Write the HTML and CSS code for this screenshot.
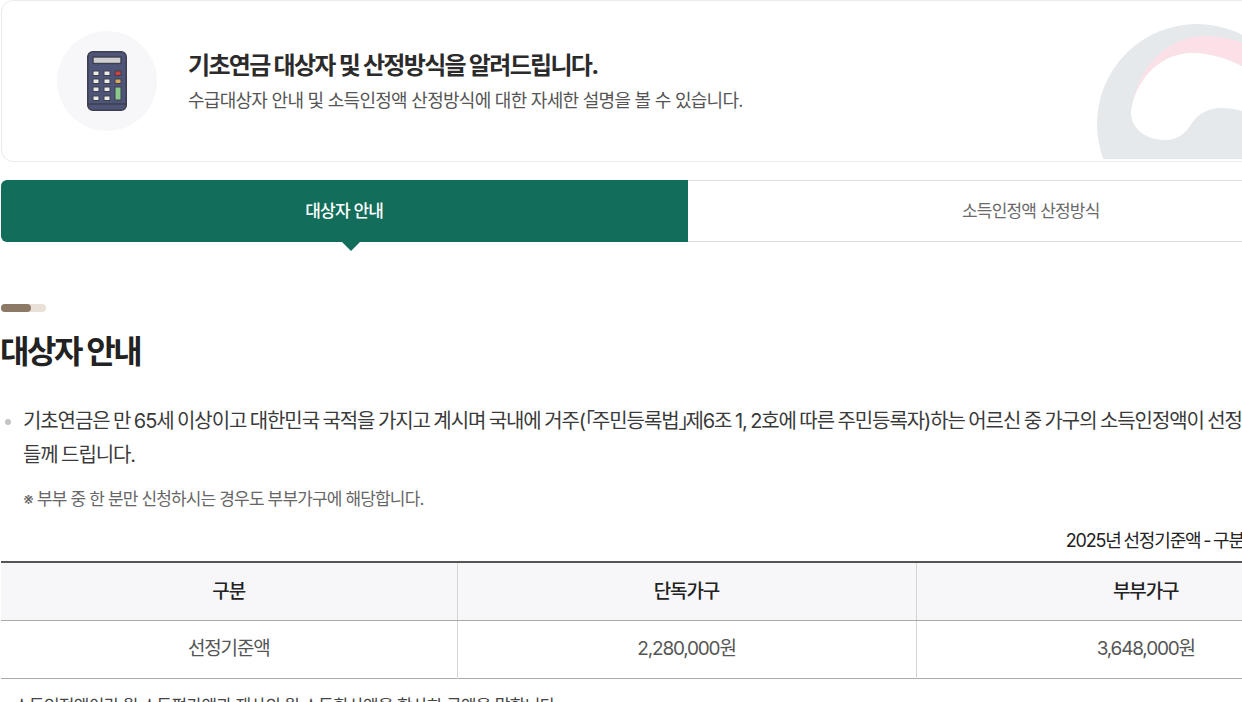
FILE: index.html
```html
<!DOCTYPE html>
<html lang="ko">
<head>
<meta charset="utf-8">
<title>기초연금 대상자 및 산정방식</title>
<link rel="stylesheet" href="styles.css">
</head>
<body>
<main class="page">
  <section class="banner">
    <div class="banner-icon">
      <svg width="40" height="60" viewBox="0 0 40 60">
        <rect x="0.800" y="0.800" width="38.400" height="58.400" rx="5" fill="#4e5578" stroke="#3d3f4f" stroke-width="1.600"/>
        <path d="M1 53h38" stroke="#3d3f4f" stroke-width="1.400"/>
        <rect x="6" y="6" width="28" height="6.500" fill="#cfcfcf" stroke="#3d3f4f" stroke-width="1.400"/>
        <g fill="#ecebe6" stroke="#3d3f4f">
          <rect x="6" y="20" width="6" height="4.500"/><rect x="17" y="20" width="6" height="4.500"/>
          <rect x="6" y="28" width="6" height="4.500"/><rect x="17" y="28" width="6" height="4.500"/>
          <rect x="6" y="36" width="6" height="4.500"/><rect x="17" y="36" width="6" height="4.500"/>
          <rect x="6" y="45" width="6" height="4.500"/><rect x="17" y="45" width="6" height="4.500"/>
          <rect x="28" y="20" width="6" height="4.500" fill="#d2423c"/>
          <rect x="28" y="28" width="6" height="4.500" fill="#d9a860"/>
          <rect x="28" y="36" width="6" height="13" fill="#8cca8c"/>
        </g>
      </svg>
    </div>
    <div class="banner-text">
      <h1 class="banner-title">기초연금 대상자 및 산정방식을 알려드립니다.</h1>
      <p class="banner-sub">수급대상자 안내 및 소득인정액 산정방식에 대한 자세한 설명을 볼 수 있습니다.</p>
    </div>
    <svg class="banner-mark" width="180" height="158" viewBox="1080 1 180 158">
      <circle cx="1197" cy="124" r="100" fill="#e5e9ec"/>
      <path d="M1131 112C1136 70 1165 36 1205 36C1225 36 1245 42 1260 50V78C1240 62 1215 53 1192 53C1160 53 1135 80 1131 112Z" fill="#fbe1e7"/>
      <path d="M1131 112C1135 80 1160 53 1192 53C1215 53 1240 62 1260 78V120C1250 112 1235 108 1222 108C1208 108 1198 114 1192 123C1186 133 1178 140 1165 140C1145 140 1131 128 1131 112Z" fill="#fff"/>
    </svg>
  </section>

  <nav class="tabs">
    <a class="tab tab-active">대상자 안내</a>
    <a class="tab">소득인정액 산정방식</a>
  </nav>

  <section class="content">
    <div class="deco"><span class="deco-fill"></span></div>
    <h2 class="section-title">대상자 안내</h2>
    <ul class="bullets">
      <li>기초연금은 만 65세 이상이고 대한민국 국적을 가지고 계시며 국내에 거주(<span class="halt">「</span>주민등록법<span class="halt">」</span>제6조 1, 2호에 따른 주민등록자)하는 어르신 중 가구의 소득인정액이 선정기준액 이하인 어르신<br>들께 드립니다.</li>
    </ul>
    <p class="note"><span class="note-mark">※</span> 부부 중 한 분만 신청하시는 경우도 부부가구에 해당합니다.</p>
    <p class="caption">2025년 선정기준액 - 구분별 금액 (단위 : 원)</p>
    <table class="data">
      <colgroup><col class="col-a"><col class="col-b"><col></colgroup>
      <thead>
        <tr><th>구분</th><th>단독가구</th><th>부부가구</th></tr>
      </thead>
      <tbody>
        <tr><td>선정기준액</td><td>2,280,000원</td><td>3,648,000원</td></tr>
      </tbody>
    </table>
    <p class="foot">소득인정액이란 월 소득평가액과 재산의 월 소득환산액을 합산한 금액을 말합니다.</p>
  </section>
</main>
</body>
</html>
```

FILE: styles.css
```css
html, body { margin: 0; padding: 0; height: 702px; overflow: hidden; background: #fff; }
body { font-family: Inter, "Noto Sans CJK KR", "Noto Sans", sans-serif; color: #222; }
.page { width: 1374px; margin-left: 1px; }
.banner { position: relative; box-sizing: border-box; height: 162px; border: 1px solid #ebebeb; border-radius: 12px; display: flex; align-items: center; padding-left: 55px; overflow: hidden; }
.banner-icon { width: 100px; height: 100px; border-radius: 50%; background: #f7f7f9; display: flex; align-items: center; justify-content: center; flex: none; }
.banner-text { margin-left: 31px; padding-top: 4px; }
.banner-title { margin: 0; font-size: 24px; line-height: 34px; font-weight: 700; letter-spacing: -1.7px; color: #2b2b2b; }
.banner-sub { margin: 1px 0 0; font-size: 18px; line-height: 34px; font-weight: 400; letter-spacing: -0.72px; color: #555; }
.banner-mark { position: absolute; left: 1078px; top: 0; }
.tabs { display: flex; margin-top: 18px; height: 62px; }
.tab { flex: 1; display: flex; align-items: center; justify-content: center; padding-bottom: 4px; font-size: 17px; letter-spacing: -0.8px; color: #6a6a6a; border: 1px solid #ddd; border-left: 0; box-sizing: border-box; position: relative; }
.tab-active { background: #126e5b; color: #fff; font-weight: 500; border: 0; border-radius: 6px 0 0 6px; }
.tab-active::after { content: ""; position: absolute; left: calc(50% + 7px); top: 100%; margin-left: -9px; border: 9px solid transparent; border-bottom: 0; border-top-color: #126e5b; }
.content { padding-top: 62px; }
.deco { width: 45px; height: 8px; border-radius: 4px; background: #e9e1d8; }
.deco-fill { display: block; width: 30px; height: 8px; border-radius: 4px; background: #8c7a66; }
.section-title { margin: 14px 0 0 -1px; font-size: 32px; line-height: 52px; font-weight: 700; letter-spacing: -2.4px; color: #222; }
.bullets { list-style: none; margin: 27px 0 0; padding: 0 0 0 22px; }
.bullets li { position: relative; font-size: 20px; line-height: 33.500px; letter-spacing: -1.1px; word-spacing: -1px; color: #3a3a3a; white-space: nowrap; }
.bullets li::before { content: ""; position: absolute; left: -18px; top: 14px; width: 6px; height: 6px; border-radius: 50%; background: #c4c4c4; }
.halt { font-feature-settings: "halt"; letter-spacing: -3px; }
.note { margin: 12px 0 0 22px; font-size: 17px; line-height: 30px; letter-spacing: -0.85px; color: #666; }
.note-mark { font-feature-settings: "halt"; }
.caption { margin: 12px 0 0; padding-right: 13px; font-size: 18px; line-height: 30px; letter-spacing: -1.15px; word-spacing: -1.200px; text-align: right; color: #222; }
.col-a { width: 456px; }
.col-b { width: 459px; }
.data { width: 100%; margin-top: 5px; border-collapse: collapse; table-layout: fixed; border-top: 2px solid #555; border-bottom: 1px solid #aaa; }
.data th { height: 58px; padding: 0 0 4px; box-sizing: border-box; background: #f7f7f9; font-size: 19px; font-weight: 500; letter-spacing: -1.1px; color: #222; border-bottom: 1px solid #aaa; border-left: 1px solid #d5d5d5; }
.data td { height: 58px; padding: 0 0 6px; box-sizing: border-box; text-align: center; font-size: 19px; letter-spacing: -1.2px; color: #555; border-left: 1px solid #d5d5d5; }
.data th:first-child, .data td:first-child { border-left: 0; }
.foot { margin: 12px 0 0 13px; font-size: 17px; line-height: 30px; letter-spacing: -0.7px; color: #444; }
```
